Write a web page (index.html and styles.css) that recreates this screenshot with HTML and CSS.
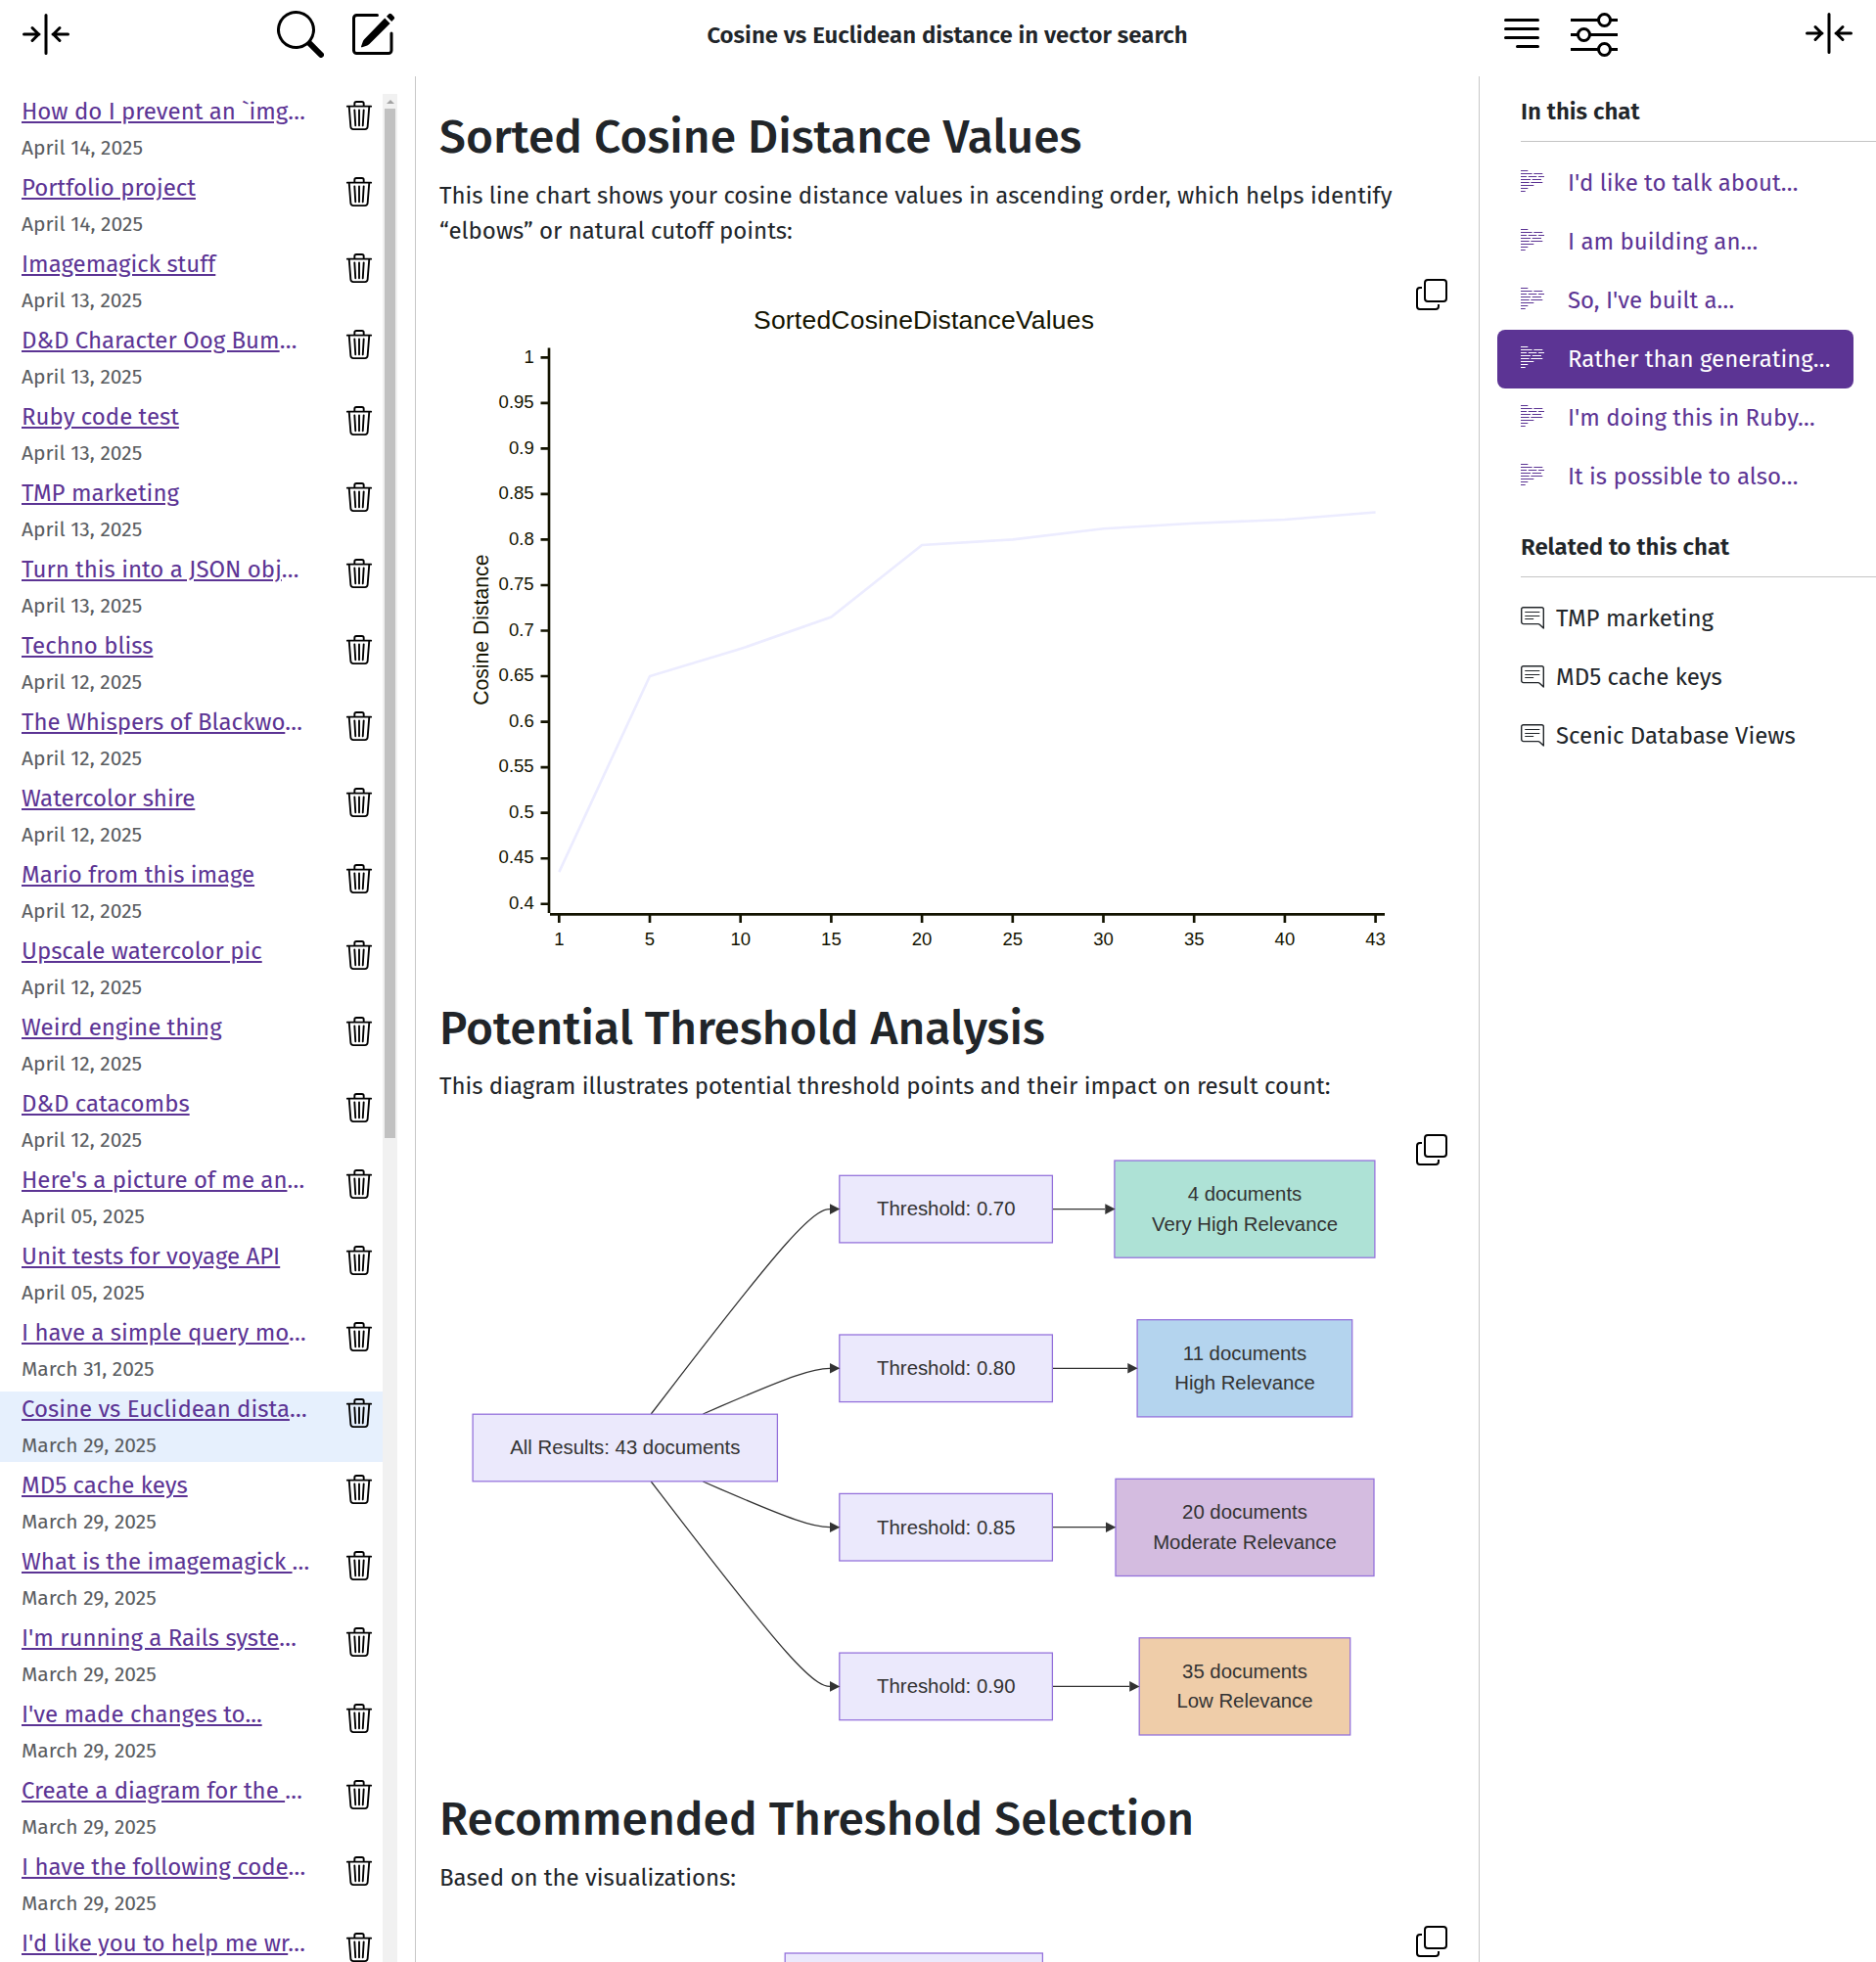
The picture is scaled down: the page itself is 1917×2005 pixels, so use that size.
FILE: index.html
```html
<!DOCTYPE html>
<html lang="en">
<head>
<meta charset="utf-8">
<title>Cosine vs Euclidean distance in vector search</title>
<link rel="stylesheet" href="styles.css">
</head>
<body>
<svg class="sprite" aria-hidden="true">
  <symbol id="trash" viewBox="0 0 16 16"><path d="M6.5 1h3a.5.5 0 0 1 .5.5v1H6v-1a.5.5 0 0 1 .5-.5M11 2.5v-1A1.5 1.5 0 0 0 9.5 0h-3A1.5 1.5 0 0 0 5 1.5v1H1.5a.5.5 0 0 0 0 1h.538l.853 10.66A2 2 0 0 0 4.885 16h6.23a2 2 0 0 0 1.994-1.84l.853-10.66h.538a.5.5 0 0 0 0-1zm1.958 1-.846 10.58a1 1 0 0 1-.997.92h-6.23a1 1 0 0 1-.997-.92L3.042 3.5zm-7.487 1a.5.5 0 0 1 .528.47l.5 8.5a.5.5 0 0 1-.998.06L5 5.03a.5.5 0 0 1 .47-.53Zm5.058 0a.5.5 0 0 1 .47.53l-.5 8.5a.5.5 0 1 1-.998-.06l.5-8.5a.5.5 0 0 1 .528-.47M8 4.5a.5.5 0 0 1 .5.5v8.5a.5.5 0 0 1-1 0V5a.5.5 0 0 1 .5-.5"/></symbol>
  <symbol id="search" viewBox="0 0 16 16"><path d="M11.742 10.344a6.5 6.5 0 1 0-1.397 1.398h-.001q.044.06.098.115l3.85 3.85a1 1 0 0 0 1.415-1.414l-3.85-3.85a1 1 0 0 0-.115-.1zM12 6.5a5.5 5.5 0 1 1-11 0 5.5 5.5 0 0 1 11 0"/></symbol>
  <symbol id="collapse" viewBox="0 0 48 48"><path d="M24 4.5v39M1.5 24H17M10 17.5l6.5 6.5-6.5 6.5M46.500 24H31M38 17.500l-6.500 6.500 6.500 6.500" fill="none" stroke="#000" stroke-width="3" stroke-linecap="round" stroke-linejoin="round"/></symbol>
  <symbol id="edit" viewBox="0 0 48 48"><path d="M26.500 4.500H5.500a3 3 0 0 0-3 3V40.500a3 3 0 0 0 3 3H38a3 3 0 0 0 3-3V23" fill="none" stroke="#000" stroke-width="3" stroke-linecap="round"/><path d="M34.200 7.500l5.400 5.400L18.500 34c-.6.600-1.400 1.100-2.200 1.400l-5.200 1.900c-.800.300-1.300-.3-1-1l1.900-5.200c.3-.9.800-1.600 1.400-2.200zM36 5.800l2.400-2.500c.8-.8 1.800-.8 2.600 0l2.600 2.600c.8.800.8 1.800 0 2.600l-2.400 2.400z"/></symbol>
  <symbol id="lines" viewBox="0 0 48 48"><path d="M7.500 8.500h33M7.500 17.500h33M7.500 26.500h33M19.500 35.500h21" stroke="#000" stroke-width="3" stroke-linecap="round"/></symbol>
  <symbol id="sliders" viewBox="0 0 48 48"><path d="M0 8.500h28M41 8.500h7M0 23.500h7M20 23.500h28M0 38.500h28M41 38.500h7" stroke="#000" stroke-width="3"/><g fill="none" stroke="#000" stroke-width="3"><circle cx="34.500" cy="8.500" r="6"/><circle cx="13.500" cy="23.500" r="6"/><circle cx="34.500" cy="38.500" r="6"/></g></symbol>
  <symbol id="copy" viewBox="0 0 32 32"><g fill="none" stroke="#000" stroke-width="2"><rect x="9" y="1" width="22" height="22" rx="3"/><path d="M6 9H4a3 3 0 0 0-3 3v16a3 3 0 0 0 3 3h16a3 3 0 0 0 3-3v-2"/></g></symbol>
  <symbol id="rows" viewBox="0 0 24 24"><path d="M0 .5h7.300M0 3.500h11.600M13.300 3.500h9M0 6.500h6M7.700 6.500h8.600M18 6.500h6M0 9.500h10M11.700 9.500h9.300M0 12.500h8.700M10.300 12.500h12M0 15.500h13.300M0 18.500h7.300M0 21.500h4.700" stroke="currentColor" stroke-width="1.100"/></symbol>
  <symbol id="comment" viewBox="0 0 24 24"><g fill="none" stroke="currentColor" stroke-width="1.400"><path d="M2.700.7h18.600a2 2 0 0 1 2 2v19.300l-4-3.800a2 2 0 0 0-1.400-.6H2.700a2 2 0 0 1-2-2V2.700a2 2 0 0 1 2-2z" stroke-linejoin="round"/><path d="M4.700 5.500h14.200M4.700 9.500h14.200M4.700 12.500h8" stroke-linecap="round" stroke-width="1.200"/></g></symbol>
</svg>

<header class="topbar">
  <div class="tools tools-left">
    <svg class="icon"><use href="#collapse"/></svg>
    <svg class="icon push"><use href="#search"/></svg>
    <svg class="icon"><use href="#edit"/></svg>
  </div>
  <h1 class="chat-title">Cosine vs Euclidean distance in vector search</h1>
  <div class="tools tools-right">
    <svg class="icon"><use href="#lines"/></svg>
    <svg class="icon"><use href="#sliders"/></svg>
    <svg class="icon push raise"><use href="#collapse"/></svg>
  </div>
</header>

<div class="layout">
  <nav class="sidebar">
    <ul class="chats">
      <li><div><a>How do I prevent an `img</a><i>…</i><time>April 14, 2025</time></div><svg><use href="#trash"/></svg></li>
      <li><div><a>Portfolio project</a><time>April 14, 2025</time></div><svg><use href="#trash"/></svg></li>
      <li><div><a>Imagemagick stuff</a><time>April 13, 2025</time></div><svg><use href="#trash"/></svg></li>
      <li><div><a>D&amp;D Character Oog Bum</a><i>…</i><time>April 13, 2025</time></div><svg><use href="#trash"/></svg></li>
      <li><div><a>Ruby code test</a><time>April 13, 2025</time></div><svg><use href="#trash"/></svg></li>
      <li><div><a>TMP marketing</a><time>April 13, 2025</time></div><svg><use href="#trash"/></svg></li>
      <li><div><a>Turn this into a JSON obj</a><i>…</i><time>April 13, 2025</time></div><svg><use href="#trash"/></svg></li>
      <li><div><a>Techno bliss</a><time>April 12, 2025</time></div><svg><use href="#trash"/></svg></li>
      <li><div><a>The Whispers of Blackwo</a><i>…</i><time>April 12, 2025</time></div><svg><use href="#trash"/></svg></li>
      <li><div><a>Watercolor shire</a><time>April 12, 2025</time></div><svg><use href="#trash"/></svg></li>
      <li><div><a>Mario from this image</a><time>April 12, 2025</time></div><svg><use href="#trash"/></svg></li>
      <li><div><a>Upscale watercolor pic</a><time>April 12, 2025</time></div><svg><use href="#trash"/></svg></li>
      <li><div><a>Weird engine thing</a><time>April 12, 2025</time></div><svg><use href="#trash"/></svg></li>
      <li><div><a>D&amp;D catacombs</a><time>April 12, 2025</time></div><svg><use href="#trash"/></svg></li>
      <li><div><a>Here's a picture of me an</a><i>…</i><time>April 05, 2025</time></div><svg><use href="#trash"/></svg></li>
      <li><div><a>Unit tests for voyage API</a><time>April 05, 2025</time></div><svg><use href="#trash"/></svg></li>
      <li><div><a>I have a simple query mo</a><i>…</i><time>March 31, 2025</time></div><svg><use href="#trash"/></svg></li>
      <li class="current"><div><a>Cosine vs Euclidean dista</a><i>…</i><time>March 29, 2025</time></div><svg><use href="#trash"/></svg></li>
      <li><div><a>MD5 cache keys</a><time>March 29, 2025</time></div><svg><use href="#trash"/></svg></li>
      <li><div><a>What is the imagemagick </a><i>…</i><time>March 29, 2025</time></div><svg><use href="#trash"/></svg></li>
      <li><div><a>I'm running a Rails syste</a><i>…</i><time>March 29, 2025</time></div><svg><use href="#trash"/></svg></li>
      <li><div><a>I've made changes to...</a><time>March 29, 2025</time></div><svg><use href="#trash"/></svg></li>
      <li><div><a>Create a diagram for the </a><i>…</i><time>March 29, 2025</time></div><svg><use href="#trash"/></svg></li>
      <li><div><a>I have the following code</a><i>…</i><time>March 29, 2025</time></div><svg><use href="#trash"/></svg></li>
      <li><div><a>I'd like you to help me wr</a><i>…</i></div><svg><use href="#trash"/></svg></li>
    </ul>
    <div class="track"><span class="up"></span><span class="thumb"></span></div>
  </nav>

  <main class="content">
    <h2>Sorted Cosine Distance Values</h2>
    <p>This line chart shows your cosine distance values in ascending order, which helps identify “elbows” or natural cutoff points:</p>
    <figure>
      <svg class="chart" viewBox="449 277 1030 745">
        <text class="c-title" x="944" y="335.500" textLength="348">SortedCosineDistanceValues</text>
        <path class="axis" d="M561 355.500V933M562 934.300H1415"/>
        <path class="tick" d="M552.500 365.300h8M552.500 411.800h8M552.500 458.400h8M552.500 504.900h8M552.500 551.400h8M552.500 598h8M552.500 644.500h8M552.500 691h8M552.500 737.600h8M552.500 784.100h8M552.500 830.600h8M552.500 877.200h8M552.500 923.700h8"/>
        <path class="tick" d="M571.300 935v8M664 935v8M756.700 935v8M849.400 935v8M942.100 935v8M1034.800 935v8M1127.500 935v8M1220.200 935v8M1312.900 935v8M1405.600 935v8"/>
        <g class="y-labels">
          <text x="545.700" y="370.600">1</text><text x="545.700" y="417.100">0.95</text><text x="545.700" y="463.700">0.9</text><text x="545.700" y="510.200">0.85</text><text x="545.700" y="556.700">0.8</text><text x="545.700" y="603.300">0.75</text><text x="545.700" y="649.800">0.7</text><text x="545.700" y="696.300">0.65</text><text x="545.700" y="742.900">0.6</text><text x="545.700" y="789.400">0.55</text><text x="545.700" y="835.900">0.5</text><text x="545.700" y="882.300">0.45</text><text x="545.700" y="929">0.4</text>
        </g>
        <g class="x-labels">
          <text x="571.300" y="966">1</text><text x="664" y="966">5</text><text x="756.700" y="966">10</text><text x="849.400" y="966">15</text><text x="942.100" y="966">20</text><text x="1034.800" y="966">25</text><text x="1127.500" y="966">30</text><text x="1220.200" y="966">35</text><text x="1312.900" y="966">40</text><text x="1405.600" y="966">43</text>
        </g>
        <text class="c-axis" transform="translate(498.600 643.700) rotate(-90)">Cosine Distance</text>
        <path class="series" d="M571.300 891.100L664 691L756.700 663.100L849.400 630.500L942.100 557L1034.800 551.400L1127.500 540.300L1220.200 534.700L1312.900 531L1405.600 523.500"/>
      </svg>
      <svg class="copy"><use href="#copy"/></svg>
    </figure>

    <h2 class="tight">Potential Threshold Analysis</h2>
    <p>This diagram illustrates potential threshold points and their impact on result count:</p>
    <figure>
      <svg class="flow" viewBox="449 1151 1030 679">
        <g class="edges">
          <path d="M665.300 1445L692.100 1410.100C719 1375.200 772.600 1305.400 803.800 1270.500C835 1235.600 843.600 1235.600 848 1235.600"/>
          <path d="M718.400 1445L736.400 1437.200C754.400 1429.400 790.300 1413.900 812.700 1406.100C835 1398.300 843.600 1398.300 848 1398.300"/>
          <path d="M718.400 1514L736.400 1521.800C754.400 1529.600 790.300 1545.100 812.700 1552.900C835 1560.700 843.600 1560.700 848 1560.700"/>
          <path d="M665.300 1514L692.100 1548.900C719 1583.800 772.600 1653.600 803.800 1688.500C835 1723.400 843.600 1723.400 848 1723.400"/>
          <path d="M1075.500 1235.600H1129M1075.500 1398.300H1152M1075.500 1560.700H1130M1075.500 1723.400H1154"/>
        </g>
        <g class="nodes">
          <rect x="483.100" y="1445.200" width="311.300" height="68.600"/>
          <rect x="857.800" y="1201.300" width="217.600" height="68.600"/>
          <rect x="857.800" y="1364" width="217.600" height="68.600"/>
          <rect x="857.800" y="1526.400" width="217.600" height="68.600"/>
          <rect x="857.800" y="1689.100" width="217.600" height="68.600"/>
          <rect class="green" x="1138.900" y="1186" width="266" height="99.200"/>
          <rect class="blue" x="1162.100" y="1348.700" width="219.600" height="99.200"/>
          <rect class="purple" x="1140" y="1511.300" width="264" height="99.200"/>
          <rect class="orange" x="1164.200" y="1673.800" width="215.500" height="99.200"/>
        </g>
        <path class="heads" d="M848 1230.300l10.300 5.300-10.300 5.300zM848 1393l10.300 5.300-10.300 5.300zM848 1555.400l10.300 5.300-10.300 5.300zM848 1718.100l10.300 5.300-10.300 5.300zM1129.300 1230.300l10.300 5.300-10.300 5.300zM1152.300 1393l10.300 5.300-10.300 5.300zM1130 1555.400l10.300 5.300-10.300 5.300zM1154.200 1718.100l10.300 5.300-10.300 5.300z"/>
        <g class="labels">
          <text x="638.800" y="1486.300">All Results: 43 documents</text>
          <text x="966.800" y="1242.400">Threshold: 0.70</text>
          <text x="966.800" y="1405.100">Threshold: 0.80</text>
          <text x="966.800" y="1567.500">Threshold: 0.85</text>
          <text x="966.800" y="1730.200">Threshold: 0.90</text>
          <text x="1272" y="1227.200">4 documents</text><text x="1272" y="1257.800">Very High Relevance</text>
          <text x="1272" y="1389.900">11 documents</text><text x="1272" y="1420">High Relevance</text>
          <text x="1272" y="1552.300">20 documents</text><text x="1272" y="1582.900">Moderate Relevance</text>
          <text x="1272" y="1715">35 documents</text><text x="1272" y="1745">Low Relevance</text>
        </g>
      </svg>
      <svg class="copy"><use href="#copy"/></svg>
    </figure>

    <h2>Recommended Threshold Selection</h2>
    <p>Based on the visualizations:</p>
    <figure>
      <svg class="flow" viewBox="449 1960 1030 120">
        <g class="nodes"><rect x="802.200" y="1996" width="263.200" height="68.600"/></g>
      </svg>
      <svg class="copy"><use href="#copy"/></svg>
    </figure>
  </main>

  <aside class="outline">
    <h3>In this chat</h3>
    <ul class="prompts">
      <li><svg><use href="#rows"/></svg>I'd like to talk about…</li>
      <li><svg><use href="#rows"/></svg>I am building an…</li>
      <li><svg><use href="#rows"/></svg>So, I've built a…</li>
      <li class="current"><svg><use href="#rows"/></svg>Rather than generating…</li>
      <li><svg><use href="#rows"/></svg>I'm doing this in Ruby…</li>
      <li><svg><use href="#rows"/></svg>It is possible to also…</li>
    </ul>
    <h3>Related to this chat</h3>
    <ul class="related">
      <li><svg><use href="#comment"/></svg>TMP marketing</li>
      <li><svg><use href="#comment"/></svg>MD5 cache keys</li>
      <li><svg><use href="#comment"/></svg>Scenic Database Views</li>
    </ul>
  </aside>
</div>
</body>
</html>
```
FILE: styles.css
```css
* { box-sizing: border-box; margin: 0; padding: 0; }
html, body { height: 100%; overflow: hidden; }
body {
  display: flex;
  flex-direction: column;
  background: #fff;
  color: #212529;
  font: 24px/36px "Fira Sans", "Noto Sans", sans-serif;
}
ul { list-style: none; }
svg { display: block; flex: none; }
.sprite { display: none; }

.topbar { display: grid; grid-template-columns: 425px 1fr 406px; height: 78px; flex: none; }
.tools { display: flex; align-items: flex-start; padding-top: 11px; }
.tools-left { padding-left: 23px; padding-right: 18px; gap: 28px; }
.tools-right { padding-left: 20px; padding-right: 24px; gap: 26px; padding-top: 12px; }
.icon { width: 48px; height: 48px; }
.push { margin-left: auto; }
.raise { margin-top: -2px; }
.chat-title { font-size: 24px; font-weight: 600; line-height: 36px; padding-top: 18px; text-align: center; }

.layout { display: grid; grid-template-columns: 424px 1088px 1fr; flex: 1; min-height: 0; }
.sidebar { display: flex; padding-top: 18px; min-height: 0; }
.chats { width: 391px; overflow: hidden; }
.chats li {
  display: flex;
  justify-content: space-between;
  height: 72px;
  margin-bottom: 6px;
  padding: 0 9px 0 22px;
}
.chats div { white-space: pre; }
.chats a { color: #5c3494; text-decoration: underline; }
.chats i { color: #5c3494; font-style: normal; }
.chats time { display: block; padding-top: 1px; font-size: 21px; color: #595c5f; }
.chats svg { width: 30px; height: 30px; margin-top: 7px; }
.chats .current { background: #e6f0fd; }
.track { width: 15px; background: #f1f1f1; padding: 0 2px; }
.up { display: block; height: 15px; padding-top: 6px; }
.up::before {
  content: "";
  display: block;
  width: 0;
  margin: 0 auto;
  border: 4px solid transparent;
  border-top: 0;
  border-bottom-color: #a3a3a3;
}
.thumb { display: block; height: 1052px; background: #c1c1c1; }

.content {
  border-left: 1px solid #c8c8c8;
  border-right: 1px solid #c8c8c8;
  padding: 33px 32px 0 24px;
  overflow: hidden;
}
.content h2 { font-size: 48px; font-weight: 500; line-height: 58px; margin-bottom: 13px; }
.content p { margin-bottom: 23px; }
.content .tight { margin-bottom: 12px; }
figure { position: relative; }
.copy { position: absolute; top: 8px; right: 0; width: 32px; height: 32px; }
.chart, .flow { width: 1030px; font-family: "Liberation Sans", Arial, sans-serif; }
.chart text { fill: #131300; text-anchor: middle; }
.chart .c-title { font-size: 26.500px; }
.chart .c-axis { font-size: 21.200px; }
.chart .y-labels text { font-size: 18.550px; text-anchor: end; }
.chart .x-labels text { font-size: 18.550px; }
.axis, .tick { stroke: #131300; stroke-width: 2.650; fill: none; }
.series { stroke: #ececff; stroke-width: 2.650; fill: none; }
.edges path { stroke: #333; stroke-width: 1.270; fill: none; }
.heads { fill: #333; }
.nodes rect { fill: #ebe9fc; stroke: #9370db; stroke-width: 1.270; }
.nodes .green { fill: #aee2d6; }
.nodes .blue { fill: #b4d4ee; }
.nodes .purple { fill: #d4bce0; }
.nodes .orange { fill: #efcda9; }
.labels text { fill: #333; font-size: 20.350px; text-anchor: middle; }

.outline { padding-top: 18px; }
.outline h3 {
  margin: 0 0 12px 42px;
  padding-bottom: 12px;
  border-bottom: 1px solid #c4c4c4;
  font-size: 24px;
  font-weight: 600;
}
.prompts li { display: flex; align-items: center; height: 60px; gap: 24px; padding-left: 24px; margin: 0 23px 0 18px; color: #5c3494; }
.prompts li svg { width: 24px; height: 24px; margin-bottom: 2px; }
.prompts .current { background: #5c3494; color: #fff; border-radius: 8px; }
.prompts { margin-bottom: 24px; }
.related li { display: flex; align-items: center; height: 60px; gap: 12px; padding-left: 42px; }
.related svg { width: 24px; height: 24px; }
```
